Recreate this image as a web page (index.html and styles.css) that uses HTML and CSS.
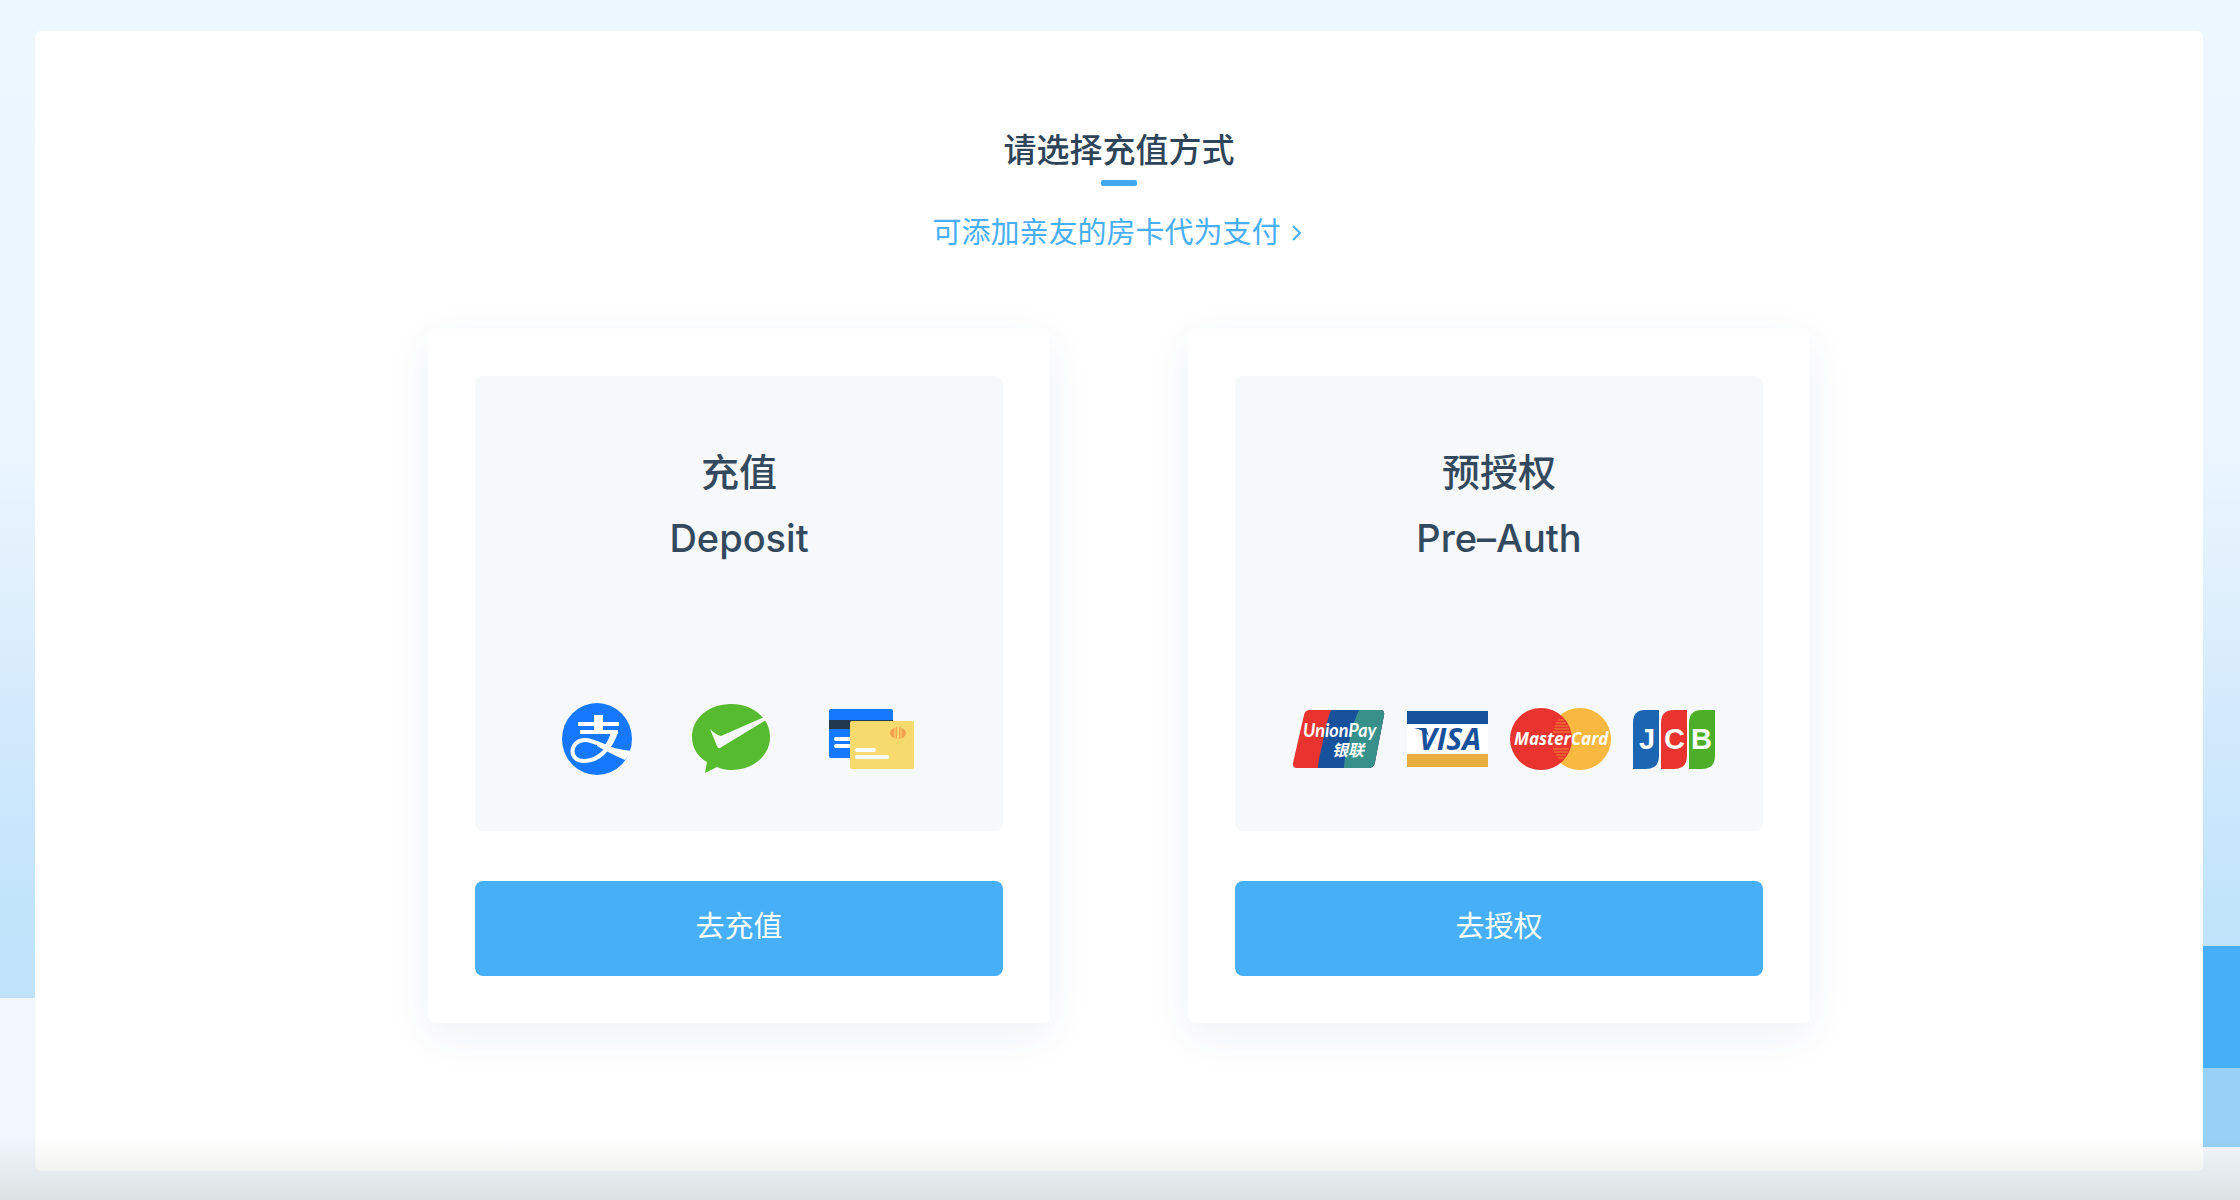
FILE: index.html
```html
<!DOCTYPE html>
<html lang="zh-CN">

<head>
    <title>请选择充值方式</title>
    <meta charset="UTF-8">
    <meta name="viewport" content="width=device-width, initial-scale=1.0">
    <link rel="stylesheet" href="styles.css">
</head>

<body>
    <main class="panel">
        <h1>请选择充值方式</h1>
        <a class="relative-link" href="#">可添加亲友的房卡代为支付
            <svg width="11" height="18" viewBox="0 0 11 18"><path d="M2 2l7 7-7 7" fill="none" stroke="currentColor" stroke-width="2"/></svg>
        </a>

        <div class="cards">
            <section class="card">
                <div class="card-info">
                    <h2>充值<br>Deposit</h2>
                    <div class="logos deposit-logos">
                        <!-- Alipay -->
                        <svg width="72" height="72" viewBox="0 0 72 72">
                            <ellipse cx="36" cy="36" rx="35" ry="36" fill="#1677ff"/>
                            <path d="M17 19h41v4H17zM33 12h9v17h-9zM19 27h38v4H19z" fill="#fff"/>
                            <path d="M54 29C50 41 42 57 24 58C7 59 8 38 23 37C30 36 40 42 50 46" fill="none" stroke="#fff" stroke-width="4"/>
                            <path d="M50 29h7q-3 10-8 16l-6-2q5-6 7-14z" fill="#fff"/>
                            <path d="M36 39Q52 46 71 48L64 57Q48 50 36 43z" fill="#fff"/>
                        </svg>
                        <!-- WeChat Pay -->
                        <svg width="78" height="70" viewBox="0 0 78 70">
                            <path d="M39 0C61 0 78 14 78 33S61 66 39 66Q31 66 25 63L13 69L15 58C6 53 0 44 0 33C0 14 17 0 39 0z" fill="#57bb2f"/>
                            <path d="M18 25Q24 31 29 32L70 14Q74 13 74 16L28 44Q26 45 25 42z" fill="#f6f8fa"/>
                        </svg>
                        <!-- bank cards -->
                        <svg width="85" height="60" viewBox="0 0 85 60">
                            <rect width="64" height="49" rx="2" fill="#1677ff"/>
                            <path d="M0 11h64v9H0z" fill="#21394f"/>
                            <path d="M7 30h20M7 37h20" stroke="#fff" stroke-width="4" stroke-linecap="round"/>
                            <rect x="21" y="12" width="64" height="48" rx="2" fill="#f6da6e"/>
                            <path d="M28 41h17M28 48h30" stroke="#fff" stroke-width="4" stroke-linecap="round"/>
                            <ellipse cx="69" cy="24" rx="8" ry="6" fill="#f3a04f"/>
                            <path d="M66 18v12M72 18v12" stroke="#f6da6e"/>
                            <path d="M69 18v12" stroke="#f6da6e" stroke-width="2"/>
                        </svg>
                    </div>
                </div>
                <button type="button">去充值</button>
            </section>

            <section class="card">
                <div class="card-info">
                    <h2>预授权<br>Pre–Auth</h2>
                    <div class="logos auth-logos">
                        <!-- UnionPay -->
                        <svg width="92" height="58" viewBox="0 0 92 58">
                            <clipPath id="union"><path d="M17 0H87Q92 0 91 5L82 52Q81 58 75 58H5Q-1 58 0 53L11 5Q12 0 17 0z"/></clipPath>
                            <g clip-path="url(#union)">
                                <path d="M0 0h92v58H0z" fill="#e8332f"/>
                                <path d="M38 0h54v58H25q0-7 4-22Q34 9 38 0z" fill="#17509b"/>
                                <path d="M66 0h26v58H51q0-9 5-26Q61 9 66 0z" fill="#38908a"/>
                            </g>
                            <text class="union-en" x="10" y="27">UnionPay</text>
                            <text class="union-cn" x="39" y="46">银联</text>
                        </svg>
                        <!-- Visa -->
                        <svg width="81" height="56" viewBox="0 0 81 56">
                            <path d="M0 0h81v56H0z" fill="#fff"/>
                            <path d="M0 0h81v13H0z" fill="#17509b"/>
                            <path d="M0 43h81v13H0z" fill="#e8ad3e"/>
                            <text class="visa" x="12" y="39">VISA</text>
                            <path d="M7 17h12l3 9q-4-7-15-9z" fill="#17509b"/>
                        </svg>
                        <!-- MasterCard -->
                        <svg width="101" height="62" viewBox="0 0 101 62">
                            <circle cx="70" cy="31" r="31" fill="#f9b83f"/>
                            <circle cx="31" cy="31" r="31" fill="#e8332f"/>
                            <path d="M48 12h6M46 15h10M45 18h13M44 21h15M43 24h17M43 41h16M44 44h14M46 47h10M48 50h6" stroke="#f08a36"/>
                            <text class="master" x="4" y="37">MasterCard</text>
                        </svg>
                        <!-- JCB -->
                        <svg width="83" height="59" viewBox="0 0 83 59">
                            <path d="M12 0H26V46Q26 59 13 59H0V13Q0 0 12 0z" fill="#1b65b3"/>
                            <path d="M41 0H54V46Q54 59 41 59H28V13Q28 0 41 0z" fill="#e8332f"/>
                            <path d="M69 0H82V46Q82 59 69 59H56V13Q56 0 69 0z" fill="#4caf27"/>
                            <text class="jcb" x="6 31 58" y="39">JCB</text>
                        </svg>
                    </div>
                </div>
                <button type="button">去授权</button>
            </section>
        </div>
    </main>
    <div class="bottom-fade"></div>
</body>

</html>
```
FILE: styles.css
```css
* {
    box-sizing: border-box;
}

body {
    margin: 0;
    padding: 31px 37px 29px 35px;
    min-height: 100vh;
    font-family: Inter, "Noto Sans CJK SC", sans-serif;
    color: #2e4559;
    background-color: #f2f7fd;
    background-image:
        linear-gradient(transparent 946px, #47aff7 946px, #47aff7 1068px, #98d1f8 1068px),
        linear-gradient(#ecf7ff 0, #eaf5fe 460px, #dceefc 630px, #cfe8fc 750px, #c2e4fb 900px, #bee3fb 998px);
    background-position: right top, left top;
    background-size: 37px 1147px, 100% 998px;
    background-repeat: no-repeat;
}

.panel {
    display: flex;
    flex-direction: column;
    align-items: center;
    min-height: calc(100vh - 60px);
    padding: 95px 40px 147px;
    background-color: #fff;
    border-radius: 6px;
}

h1 {
    margin: 0;
    font-size: 33px;
    font-weight: 500;
    line-height: 48px;
}

h1::after {
    content: "";
    display: block;
    width: 36px;
    height: 6px;
    margin: 6px auto 0;
    border-radius: 2px;
    background-color: #41a9f2;
}

.relative-link {
    display: flex;
    align-items: center;
    gap: 10px;
    margin-top: 26px;
    padding-right: 4px;
    font-size: 29px;
    line-height: 42px;
    color: #47aff7;
    text-decoration: none;
}

.cards {
    display: flex;
    justify-content: center;
    gap: 138px;
    width: 100%;
    margin-top: 75px;
}

.card {
    display: flex;
    flex-direction: column;
    gap: 50px;
    width: 622px;
    padding: 47px;
    border-radius: 8px;
    background-color: #fff;
    box-shadow: 0 12px 40px rgba(50, 80, 130, 0.08);
}

.card-info {
    display: flex;
    flex-direction: column;
    justify-content: space-between;
    min-height: 455px;
    padding: 63px 0 56px;
    border-radius: 8px;
    background-color: #f6f8fa;
}

h2 {
    margin: 0;
    font-size: 38px;
    font-weight: 500;
    line-height: 66px;
    text-align: center;
    color: #33495e;
}

.logos {
    display: flex;
    justify-content: center;
    align-items: center;
    height: 72px;
}

.deposit-logos {
    gap: 59px;
    padding-right: 3px;
}

.auth-logos {
    gap: 22px;
    padding-left: 11px;
}

button {
    height: 95px;
    padding: 0 0 10px;
    border: none;
    border-radius: 8px;
    font-family: inherit;
    font-size: 29px;
    color: white;
    background-color: #47aff7;
    cursor: pointer;
}

button:hover {
    background-color: #3ba3ec;
}

.union-en {
    font: italic bold 18px Lato, sans-serif;
    fill: #fff;
}

.union-cn {
    font: italic bold 16px "Noto Sans CJK SC", sans-serif;
    fill: #fff;
}

.visa {
    font: italic bold 30px "Open Sans", sans-serif;
    fill: #17509b;
}

.master {
    font: italic bold 17px "Open Sans", sans-serif;
    fill: #fff;
}

.jcb {
    font: bold 29px "Liberation Sans", sans-serif;
    fill: #fff;
}

.bottom-fade {
    position: fixed;
    left: 0;
    right: 0;
    bottom: 0;
    height: 64px;
    pointer-events: none;
    background-image: linear-gradient(transparent, rgba(40, 50, 20, 0.06) 34px, rgba(40, 50, 20, 0.1));
}
```
